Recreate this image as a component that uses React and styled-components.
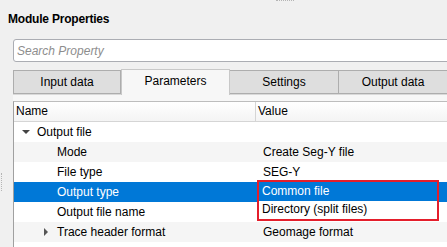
import styled, { createGlobalStyle } from 'styled-components'

const GlobalStyle = createGlobalStyle`
	html, body {
		margin: 0;
		padding: 0;
		background: #f0f0f0;
		overflow: hidden;
	}
	body {
		font-family: 'Liberation Sans', Arial, sans-serif;
		font-size: 12px;
		color: #000;
	}
`

const tabs = ['Input data', 'Parameters', 'Settings', 'Output data']

const rows = [
	{ name: 'Output file', value: '', level: 0, arrow: 'down' },
	{ name: 'Mode', value: 'Create Seg-Y file', level: 1 },
	{ name: 'File type', value: 'SEG-Y', level: 1 },
	{ name: 'Output type', value: 'Common file', level: 1, selected: true, dropdown: true },
	{ name: 'Output file name', value: '', level: 1 },
	{ name: 'Trace header format', value: 'Geomage format', level: 1, arrow: 'right' },
]

const options = ['Common file', 'Directory (split files)']

export default function App() {
	return (
		<>
			<GlobalStyle />
			<Page>
				<TopGrip />
				<Title>Module Properties</Title>
				<Body>
					<Gutter>
						<SideGrip />
					</Gutter>
					<Main>
						<Search placeholder='Search Property' />
						<TabBar>
							{tabs.map((tab) => (
								<Tab key={tab} $active={tab === 'Parameters'}>
									{tab}
								</Tab>
							))}
						</TabBar>
						<Pane>
							<Table>
								<HeaderRow>
									<HeadCell $w={243}>Name</HeadCell>
									<HeadCell>Value</HeadCell>
								</HeaderRow>
								{rows.map((row, index) => (
									<Row key={row.name} $alt={index % 2 === 1} $selected={row.selected}>
										<NameCell $level={row.level}>
											<Arrow>
												{row.arrow === 'down' && <ArrowDown />}
												{row.arrow === 'right' && <ArrowRight />}
											</Arrow>
											{row.name}
										</NameCell>
										<ValueCell>
											{row.value}
											{row.dropdown && (
												<DropList>
													{options.map((opt, i) => (
														<Option key={opt} $active={i === 0}>
															{opt}
														</Option>
													))}
												</DropList>
											)}
										</ValueCell>
									</Row>
								))}
								<Filler />
							</Table>
						</Pane>
					</Main>
				</Body>
			</Page>
		</>
	)
}

const Page = styled.div`
	width: 447px;
	height: 247px;
	display: flex;
	flex-direction: column;
	overflow: hidden;
`

const TopGrip = styled.div`
	margin-left: 276px;
	width: 18px;
	height: 1px;
	border-top: 1px dotted #b5b5b5;
`

const Title = styled.div`
	height: 28px;
	padding: 8px 0 0 8px;
	box-sizing: border-box;
	height: 37px;
	line-height: 18px;
	font-weight: bold;
	font-size: 12px;
	letter-spacing: -0.2px;
`

const Body = styled.div`
	flex: 1;
	display: flex;
`

const Gutter = styled.div`
	width: 13px;
	flex: none;
	padding-top: 134px;
	box-sizing: border-box;
`

const SideGrip = styled.div`
	margin-left: 1px;
	width: 1px;
	height: 18px;
	border-left: 1px dotted #b5b5b5;
`

const Main = styled.div`
	flex: 1;
	display: flex;
	flex-direction: column;
	min-width: 0;
	margin-right: -20px;
`

const Search = styled.input`
	height: 23px;
	box-sizing: border-box;
	border: 1px solid #abadb3;
	border-radius: 3px;
	background: #fff;
	padding: 0 3px;
	font-family: 'Liberation Sans', Arial, sans-serif;
	font-size: 12px;
	outline: none;
	&::placeholder {
		color: #8d8d8d;
		font-style: italic;
	}
`

const TabBar = styled.div`
	display: flex;
	align-items: flex-end;
	margin-top: 6px;
	height: 26px;
	border-bottom: 1px solid #d9d9d9;
`

const Tab = styled.div`
	width: 108px;
	flex: none;
	box-sizing: border-box;
	height: ${(p) => (p.$active ? '26px' : '24px')};
	margin-bottom: ${(p) => (p.$active ? '-1px' : '0')};
	display: flex;
	align-items: center;
	justify-content: center;
	padding-bottom: ${(p) => (p.$active ? '3px' : '0')};
	background: ${(p) => (p.$active ? '#f7f7f7' : '#dedede')};
	border: 1px solid ${(p) => (p.$active ? '#c8c8c8' : '#adadad')};
	border-bottom: ${(p) => (p.$active ? 'none' : '1px solid #adadad')};
	border-left-width: ${(p) => (p.$active ? '1px' : '0')};
	&:first-child {
		border-left-width: 1px;
	}
	& + & {
		width: 109px;
	}
`

const Pane = styled.div`
	flex: 1;
	background: #f7f7f7;
	padding-top: 6px;
	display: flex;
	flex-direction: column;
`

const Table = styled.div`
	flex: 1;
	display: flex;
	flex-direction: column;
	background: #fff;
	border-left: 1px solid #a0a0a0;
	border-top: 1px solid #bdbdbd;
`

const HeaderRow = styled.div`
	display: flex;
	height: 19px;
	background: linear-gradient(#ffffff, #f4f4f4);
	border-bottom: 1px solid #d5d5d5;
`

const HeadCell = styled.div`
	${(p) => (p.$w ? `width: ${p.$w - 1}px; border-right: 1px solid #d5d5d5;` : 'flex: 1;')}
	padding-left: 2px;
	line-height: 19px;
	box-sizing: border-box;
	flex: ${(p) => (p.$w ? 'none' : '1')};
`

const Row = styled.div`
	display: flex;
	height: 20px;
	line-height: 20px;
	background: ${(p) => (p.$selected ? '#0078d7' : p.$alt ? '#f5f5f5' : '#fff')};
	color: ${(p) => (p.$selected ? '#fff' : '#000')};
`

const NameCell = styled.div`
	width: 242px;
	flex: none;
	display: flex;
	align-items: center;
	padding-left: ${(p) => 6 + p.$level * 20}px;
	box-sizing: border-box;
`

const Arrow = styled.span`
	width: 17px;
	height: 20px;
	display: flex;
	align-items: center;
	flex: none;
	margin-left: 0;
`

const ArrowDown = styled.span`
	width: 0;
	height: 0;
	margin-left: 2px;
	border-left: 4px solid transparent;
	border-right: 4px solid transparent;
	border-top: 4px solid #444;
`

const ArrowRight = styled.span`
	width: 0;
	height: 0;
	margin-left: 4px;
	border-top: 4px solid transparent;
	border-bottom: 4px solid transparent;
	border-left: 4px solid #555;
`

const ValueCell = styled.div`
	flex: 1;
	position: relative;
	padding-left: 7px;
`

const DropList = styled.div`
	position: absolute;
	left: 1px;
	top: -2px;
	width: 182px;
	box-sizing: border-box;
	border: 2px solid #e41e2b;
	background: #fff;
	color: #000;
	display: flex;
	flex-direction: column;
`

const Option = styled.div`
	height: 19px;
	line-height: 19px;
	padding-left: 3px;
	background: ${(p) => (p.$active ? '#0078d7' : '#fff')};
	color: ${(p) => (p.$active ? '#fff' : '#000')};
	&:last-child {
		height: 18px;
		line-height: 17px;
	}
`

const Filler = styled.div`
	flex: 1;
	background: #fff;
`
